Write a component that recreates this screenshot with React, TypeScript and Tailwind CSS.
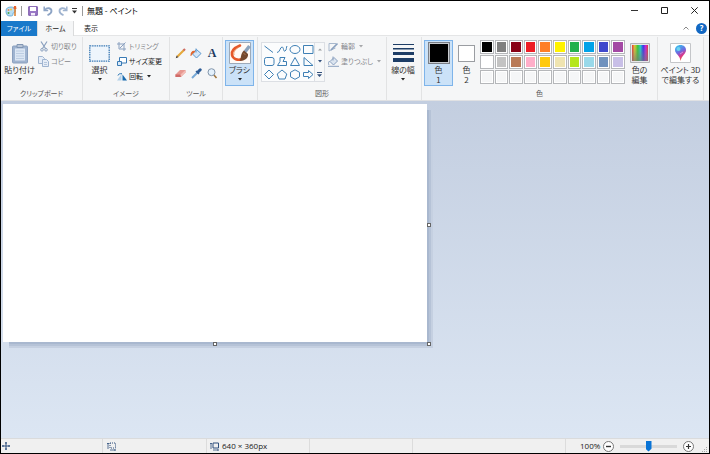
import React from "react";
import { clsx } from "clsx";

type Kids = { children?: React.ReactNode };

function Icon({ w, h, vb, className, children }: Kids & { w: string; h: string; vb: string; className?: string }) {
  return (
    <svg viewBox={vb} className={clsx("shrink-0", w, h, className)} fill="none" aria-hidden="true">
      {children}
    </svg>
  );
}

function Caret({ className = "text-[#222]" }: { className?: string }) {
  return (
    <Icon w="w-[4px]" h="h-[3px]" vb="0 0 4 3" className={className}>
      <path d="M0 0h4L2 2.500z" fill="currentColor" />
    </Icon>
  );
}

function Group({ label, width, children }: Kids & { label?: string; width: string }) {
  return (
    <section className={clsx("flex shrink-0 flex-col border-r border-[#e2e3e4]", width)} aria-label={label}>
      <div className="flex h-[50px]">{children}</div>
      {label && <div className="text-center text-[7px] leading-[13px] text-[#555]">{label}</div>}
    </section>
  );
}

function BigButton({
  label,
  second,
  caret,
  active,
  width,
  children,
}: Kids & { label: string; second?: string; caret?: boolean; active?: boolean; width: string }) {
  return (
    <button
      className={clsx(
        "mt-[3px] flex h-[46px] shrink-0 flex-col items-center border",
        active ? "border-[#7eb4ea] bg-[#cbe2f8]" : "border-transparent",
        width,
      )}
    >
      <span className="flex h-[24px] items-center justify-center">{children}</span>
      <span className="whitespace-nowrap leading-[10px]">{label}</span>
      {second && <span className="whitespace-nowrap leading-[10px]">{second}</span>}
      {caret && (
        <span className="mt-[3px]">
          <Caret />
        </span>
      )}
    </button>
  );
}

function SmallButton({ label, caret, disabled, children }: Kids & { label: string; caret?: boolean; disabled?: boolean }) {
  return (
    <button
      disabled={disabled}
      className={clsx("flex h-[15px] items-center gap-[2px] text-[7px] whitespace-nowrap", disabled ? "text-[#85878b]" : "text-[#222]")}
    >
      <span className="flex w-[11px] justify-center">{children}</span>
      <span>{label}</span>
      {caret && <Caret className={clsx("ml-[2px]", disabled ? "text-[#a5a7aa]" : "text-[#222]")} />}
    </button>
  );
}

function TitleBar() {
  return (
    <header className="flex h-[20px] items-center bg-white pb-px pl-1 text-black">
      <Icon w="w-3" h="h-3" vb="0 0 12 12">
        <path d="M1 6c0-3 2-4 5-4 4 0 5 3 4 5-1 1-2 0-2 2 0 2-1 2-3 2-3 0-4-2-4-5z" fill="#b9ddf2" stroke="#5ba3cf" strokeWidth=".8" />
        <circle cx="3.500" cy="5" r="1" fill="#e88b5c" />
        <circle cx="3.500" cy="8" r="1" fill="#48a54a" />
        <circle cx="6" cy="4.500" r="1" fill="#f6c443" />
        <path d="M10 3v8" stroke="#db7b26" strokeWidth="1.500" />
        <path d="M9 1h2l.5 3h-3z" fill="#e8622a" />
      </Icon>
      <span className="ml-1 h-[10px] w-px bg-[#9a9a9a]" />
      <button aria-label="上書き保存" className="ml-[6px]">
        <Icon w="w-[10px]" h="h-[10px]" vb="0 0 10 10">
          <path d="M.7.7h8.600v8.600H.7z" fill="#9a78c6" stroke="#7a57ab" />
          <path d="M2 1h6v4H2z" fill="#fff" />
          <path d="M3 7h4v2.500H3z" fill="#f3ecfa" />
        </Icon>
      </button>
      <button aria-label="元に戻す" className="ml-[5px]">
        <Icon w="w-[10px]" h="h-[10px]" vb="0 0 10 10">
          <path d="M1.200 .5v4h4" stroke="#8da4c5" strokeWidth="1.500" />
          <path d="M2 4c2-3 6.500-2 6.500 1 0 2-1.500 3-4 4.200" stroke="#8da4c5" strokeWidth="1.800" />
        </Icon>
      </button>
      <button aria-label="やり直し" className="ml-[5px]">
        <Icon w="w-[10px]" h="h-[10px]" vb="0 0 10 10">
          <path d="M8.800 .5v4h-4" stroke="#9fb3cf" strokeWidth="1.500" />
          <path d="M8 4C6 1 1.500 2 1.500 5c0 2 1.500 3 4 4.200" stroke="#9fb3cf" strokeWidth="1.800" />
        </Icon>
      </button>
      <button aria-label="クイック アクセス ツール バーのカスタマイズ" className="ml-[4px]">
        <Icon w="w-[5px]" h="h-[6px]" vb="0 0 5 6">
          <path d="M0 .5h5" stroke="#333" />
          <path d="M0 2.500h5L2.500 5.500z" fill="#333" />
        </Icon>
      </button>
      <span className="ml-[5px] h-[10px] w-px bg-[#9a9a9a]" />
      <h1 className="ml-[4px] whitespace-nowrap">無題 - ペイント</h1>
      <div className="ml-auto flex">
        <button aria-label="最小化" className="flex h-[18px] w-[30px] items-center justify-center">
          <Icon w="w-[7px]" h="h-[7px]" vb="0 0 7 7">
            <path d="M0 3.500h7" stroke="#333" />
          </Icon>
        </button>
        <button aria-label="最大化" className="flex h-[18px] w-[30px] items-center justify-center">
          <Icon w="w-[7px]" h="h-[7px]" vb="0 0 7 7">
            <path d="M.5.5h6v6h-6z" stroke="#222" />
          </Icon>
        </button>
        <button aria-label="閉じる" className="flex h-[18px] w-[30px] items-center justify-center">
          <Icon w="w-[7px]" h="h-[7px]" vb="0 0 7 7">
            <path d="M.3.3l6.400 6.400M6.700.3L.3 6.700" stroke="#222" />
          </Icon>
        </button>
      </div>
    </header>
  );
}

function Tabs() {
  return (
    <nav className="flex h-[15px] items-stretch bg-white text-[7px] text-[#222]">
      <button className="w-[36px] bg-[#1979ca] text-white">ファイル</button>
      <button className="w-[37px] border-x border-[#dadbdc] bg-[#f5f6f7]">ホーム</button>
      <div className="flex flex-1 items-center border-b border-[#e4e5e6]">
        <button className="w-[34px]">表示</button>
        <button aria-label="リボンの最小化" className="ml-auto">
          <Icon w="w-[6px]" h="h-[4px]" vb="0 0 6 4">
            <path d="M.5 3.500L3 1l2.500 2.500" stroke="#888" />
          </Icon>
        </button>
        <button
          aria-label="ヘルプ"
          className="mr-[2px] ml-[7px] flex size-[11px] items-center justify-center rounded-full bg-[#1268c3] text-[8px] leading-none font-bold text-white"
        >
          ?
        </button>
      </div>
    </nav>
  );
}

const shapes: { name: string; d: string }[] = [
  { name: "直線", d: "M1.500 2L10 8.500" },
  { name: "曲線", d: "M1 8.500C4 8.500 4 3 6 3s1 5 3 4 1-4 2-5" },
  { name: "楕円", d: "M1 5.500a5 4 0 1 0 10 0a5 4 0 1 0-10 0" },
  { name: "四角形", d: "M1.500 1.500h9.500v8h-9.500z" },
  { name: "角丸四角形", d: "M3.500 1.500h5.500q2 0 2 2v4q0 2-2 2H3.500q-2 0-2-2v-4q0-2 2-2z" },
  { name: "多角形", d: "M1.500 9.500l2.500-4V1.500h5l-2 4h3.500v4z" },
  { name: "三角形", d: "M6 1.500l4.500 8h-9z" },
  { name: "直角三角形", d: "M2 1.500v8h9z" },
  { name: "ひし形", d: "M6 1l4.500 4.500L6 10 1.500 5.500z" },
  { name: "五角形", d: "M6 1l4.800 4L9 10H3L1.200 5z" },
  { name: "六角形", d: "M6 .8l4.500 2.500v4.500L6 10.300 1.500 7.800V3.300z" },
  { name: "右矢印", d: "M1.500 3.500h5v-2L11 5.500l-4.500 4v-2h-5z" },
];

function Shapes() {
  return (
    <div className="mt-[5px] ml-[3px] flex h-[40px] w-[64px] shrink-0 border border-[#dcdfe4] bg-[#fbfcfd]">
      <div className="grid flex-1 grid-cols-4 grid-rows-3 place-items-center">
        {shapes.map((s) => (
          <button key={s.name} aria-label={s.name}>
            <Icon w="w-[12px]" h="h-[11px]" vb="0 0 12 11">
              <path d={s.d} stroke="#3f80b5" strokeWidth="1" />
            </Icon>
          </button>
        ))}
      </div>
      <div className="flex w-[10px] flex-col items-center justify-around border-l border-[#dcdfe4] bg-[#f7f8f9]">
        <button aria-label="上へ">
          <Icon w="w-[4px]" h="h-[3px]" vb="0 0 4 3">
            <path d="M0 2.500h4L2 .5z" fill="#9a9ca0" />
          </Icon>
        </button>
        <button aria-label="下へ">
          <Icon w="w-[4px]" h="h-[3px]" vb="0 0 4 3">
            <path d="M0 0h4L2 2.500z" fill="#33507c" />
          </Icon>
        </button>
        <button aria-label="その他">
          <Icon w="w-[5px]" h="h-[5px]" vb="0 0 5 5">
            <path d="M0 0h5v1H0zM0 2.200h5L2.500 5z" fill="#33507c" />
          </Icon>
        </button>
      </div>
    </div>
  );
}

const palette: { id: string; color: string }[] = [
  { id: "黒", color: "bg-[#000000]" },
  { id: "灰色-50%", color: "bg-[#7f7f7f]" },
  { id: "濃い赤", color: "bg-[#880015]" },
  { id: "赤", color: "bg-[#ed1c24]" },
  { id: "オレンジ", color: "bg-[#ff7f27]" },
  { id: "黄", color: "bg-[#fff200]" },
  { id: "緑", color: "bg-[#22b14c]" },
  { id: "青緑", color: "bg-[#00a2e8]" },
  { id: "藍色", color: "bg-[#3f48cc]" },
  { id: "紫", color: "bg-[#a349a4]" },
  { id: "白", color: "bg-[#ffffff]" },
  { id: "灰色-25%", color: "bg-[#c3c3c3]" },
  { id: "茶", color: "bg-[#b97a57]" },
  { id: "ローズ", color: "bg-[#ffaec9]" },
  { id: "ゴールド", color: "bg-[#ffc90e]" },
  { id: "薄い黄", color: "bg-[#efe4b0]" },
  { id: "ライム", color: "bg-[#b5e61d]" },
  { id: "薄い青緑", color: "bg-[#99d9ea]" },
  { id: "青灰色", color: "bg-[#7092be]" },
  { id: "薄い紫", color: "bg-[#c8bfe7]" },
  ...Array.from({ length: 10 }, (_, i) => ({ id: `ユーザー設定 ${i + 1}`, color: "bg-[#f5f6f7]" })),
];

function Ribbon() {
  return (
    <div className="flex h-[65px] border-b border-[#e0e1e3] bg-[#f5f6f7] pt-px text-[#333]">
      <Group label="クリップボード" width="w-[82px]">
        <BigButton label="貼り付け" caret width="w-[37px]">
          <Icon w="w-[18px]" h="h-[21px]" vb="0 0 18 21">
            <rect x="1.500" y="3" width="15" height="17" rx="1" fill="#9fb4d0" stroke="#8aa0bf" />
            <path d="M4 5.500h10v12H4z" fill="#dce7f4" />
            <path d="M5 8h8M5 10.500h8M5 13h8M5 15.500h8" stroke="#bccde2" />
            <path d="M6 1.500h6v3H6z" fill="#b9c6d8" stroke="#8196b3" />
          </Icon>
        </BigButton>
        <div className="flex flex-col pt-[2px]">
          <SmallButton label="切り取り" disabled>
            <Icon w="w-[8px]" h="h-[11px]" vb="0 0 8 11">
              <path d="M1 .5l4.500 7M7 .5l-4.500 7" stroke="#8aa0bf" strokeWidth="1.200" />
              <circle cx="2" cy="8.800" r="1.300" stroke="#8aa0bf" />
              <circle cx="6" cy="8.800" r="1.300" stroke="#8aa0bf" />
            </Icon>
          </SmallButton>
          <SmallButton label="コピー" disabled>
            <Icon w="w-[11px]" h="h-[11px]" vb="0 0 11 11">
              <path d="M.5.5h4l2 2v5h-6z" fill="#e6edf7" stroke="#9fb4d0" />
              <path d="M4.500 3.500h4l2 2v5h-6z" fill="#e6edf7" stroke="#9fb4d0" />
              <path d="M6 6.500h3M6 8.500h3" stroke="#9fb4d0" strokeWidth=".7" />
            </Icon>
          </SmallButton>
        </div>
      </Group>

      <Group label="イメージ" width="w-[87px]">
        <BigButton label="選択" caret width="w-[33px]">
          <Icon w="w-[21px]" h="h-[17px]" vb="0 0 21 17">
            <path d="M.8.8h19.400v15.400H.8z" fill="#eef5fc" stroke="#397ab5" strokeWidth="1.300" strokeDasharray="1.500 .8" />
          </Icon>
        </BigButton>
        <div className="flex flex-col pt-[2px]">
          <SmallButton label="トリミング" disabled>
            <Icon w="w-[9px]" h="h-[9px]" vb="0 0 9 9">
              <path d="M2 0v7h7M0 2h7v7M3 6l5.500-5.500" stroke="#8aa0bf" />
            </Icon>
          </SmallButton>
          <SmallButton label="サイズ変更">
            <Icon w="w-[10px]" h="h-[9px]" vb="0 0 10 9">
              <path d="M2.500.5h7v5.500h-7z" fill="#fff" stroke="#397ab5" />
              <path d="M.5 4.500h4v4h-4z" fill="#d7e8f8" stroke="#397ab5" />
            </Icon>
          </SmallButton>
          <SmallButton label="回転" caret>
            <Icon w="w-[10px]" h="h-[8px]" vb="0 0 10 8">
              <path d="M4.500 1v6.500H0z" fill="#b4d1ea" />
              <path d="M5.500 1.500v6H10z" fill="#1769ad" />
              <path d="M1 2.500C1.500.8 3 .5 5 .8" stroke="#1769ad" />
            </Icon>
          </SmallButton>
        </div>
      </Group>

      <Group label="ツール" width="w-[53px]">
        <div className="mt-[6px] ml-[2px] grid h-[40px] w-[48px] grid-cols-3 grid-rows-2 place-items-center">
          <button aria-label="鉛筆">
            <Icon w="w-[11px]" h="h-[11px]" vb="0 0 11 11">
              <path d="M2.500 8.500L9 2" stroke="#e5a93c" strokeWidth="2.200" />
              <path d="M8.500 2.500l1.500-1.500" stroke="#cf6b62" strokeWidth="2.200" />
              <path d="M.7 10.300l1-2.700 1.700 1.700z" fill="#4a3a2a" />
            </Icon>
          </button>
          <button aria-label="塗りつぶし">
            <Icon w="w-[12px]" h="h-[11px]" vb="0 0 12 11">
              <path d="M6.500 1.500l4.500 4-4.500 4.500-4-4z" fill="#d3e6f8" stroke="#5a96cc" />
              <path d="M6 .5v4" stroke="#5a96cc" />
              <path d="M5.500 2.800C2 2 .3 4 .5 8c1.500 0 1.200-2.200 3.500-3z" fill="#e0672f" />
            </Icon>
          </button>
          <button aria-label="テキスト" className="font-['Liberation_Serif',serif] text-[12px] leading-none font-bold text-[#1f3a61]">
            A
          </button>
          <button aria-label="消しゴム">
            <Icon w="w-[11px]" h="h-[9px]" vb="0 0 11 9">
              <path d="M5 1h5.500v2.500L6 8H.5V5.500z" fill="#e79891" />
              <path d="M.5 5.500h5L6 8H.5z" fill="#cf6b68" />
              <path d="M5.500 5.500l5-4.500v2.500L6 8z" fill="#f3bbb4" />
            </Icon>
          </button>
          <button aria-label="色の選択">
            <Icon w="w-[11px]" h="h-[11px]" vb="0 0 11 11">
              <path d="M1 10l5-5" stroke="#77a9d6" strokeWidth="2" />
              <path d="M5 3l3 3" stroke="#2d5c96" strokeWidth="1.500" />
              <path d="M7 4l2.200-2.200" stroke="#2d5c96" strokeWidth="3" strokeLinecap="round" />
            </Icon>
          </button>
          <button aria-label="拡大鏡">
            <Icon w="w-[11px]" h="h-[11px]" vb="0 0 11 11">
              <path d="M6.500 6.500L9.500 10" stroke="#a1763e" strokeWidth="1.600" />
              <circle cx="4.500" cy="4.200" r="3.500" fill="#e4f1fc" stroke="#8295aa" />
            </Icon>
          </button>
        </div>
      </Group>

      <Group width="w-[35px]">
        <span className="w-[2px] shrink-0" />
        <BigButton label="ブラシ" caret active width="w-[29px]">
          <Icon w="w-[22px]" h="h-[22px]" vb="0 0 22 22">
            <path d="M.5.5h21v21H.5z" fill="#fffaf6" stroke="#9daab9" />
            <path d="M11 3.500C5 6 2 9 3 13s6 6 10 4" stroke="#e5582a" strokeWidth="2.600" strokeLinecap="round" />
            <path d="M10 5C6 7.500 4 10 5 13" stroke="#f08d58" />
            <path d="M20.500 4L15.500 10.500" stroke="#8ba3bd" strokeWidth="3.400" />
            <path d="M15 8.500l4 3.500c.5 4-3 7-8.500 7 2-2 .5-7 4.500-10.500z" fill="#74492f" />
            <path d="M14.500 11l2 2" stroke="#a9764f" />
          </Icon>
        </BigButton>
      </Group>

      <Group label="図形" width="w-[129px]">
        <Shapes />
        <div className="ml-[3px] flex flex-col pt-[2px]">
          <SmallButton label="輪郭" caret disabled>
            <Icon w="w-[11px]" h="h-[10px]" vb="0 0 11 10">
              <path d="M8 1.500H1v7.500l6.500-3" stroke="#a8b8cd" />
              <path d="M3 8l6.500-6.500" stroke="#8aa0bf" strokeWidth="1.700" />
            </Icon>
          </SmallButton>
          <SmallButton label="塗りつぶし" caret disabled>
            <Icon w="w-[11px]" h="h-[11px]" vb="0 0 11 11">
              <path d="M6 1.500l3.500 3.500-4 4L2 5.500z" fill="#dce5f0" stroke="#8aa0bf" />
              <path d="M5 .5v4M1.500 5C0 7 .5 8 1 9M0 10.300h11" stroke="#8aa0bf" />
            </Icon>
          </SmallButton>
        </div>
      </Group>

      <Group width="w-[35px]">
        <BigButton label="線の幅" caret width="w-[32px]">
          <Icon w="w-[21px]" h="h-[19px]" vb="0 0 21 19">
            <path d="M0 0h21v1H0zM0 4h21v1.500H0zM0 8h21v3H0zM0 14h21v4H0z" fill="#1d3d66" />
          </Icon>
        </BigButton>
      </Group>

      <Group label="色" width="w-[236px]">
        <span className="w-[2px] shrink-0" />
        <BigButton label="色" second="1" active width="w-[29px]">
          <span className="flex size-[22px] border border-[#7a7f87] bg-[#c9ccd0] p-px">
            <span className="flex-1 bg-black" />
          </span>
        </BigButton>
        <BigButton label="色" second="2" width="w-[27px]">
          <span className="flex size-[17px] border border-[#9a9da2] bg-white" />
        </BigButton>
        <div className="mt-[3px] grid h-[44px] w-[145px] shrink-0 grid-cols-10 grid-rows-3 gap-px">
          {palette.map((p) => (
            <button key={p.id} aria-label={p.id} className="flex border border-[#b5b7ba] bg-white p-px">
              <span className={clsx("h-full flex-1", p.color)} />
            </button>
          ))}
        </div>
        <BigButton label="色の" second="編集" width="w-[29px]">
          <Icon w="w-[20px]" h="h-[20px]" vb="0 0 20 20">
            <defs>
              <linearGradient id="hue">
                <stop offset="0" stopColor="#e33" />
                <stop offset=".17" stopColor="#dc3" />
                <stop offset=".36" stopColor="#3c3" />
                <stop offset=".53" stopColor="#2cc" />
                <stop offset=".7" stopColor="#33e" />
                <stop offset=".86" stopColor="#c2d" />
                <stop offset="1" stopColor="#e33" />
              </linearGradient>
              <linearGradient id="shade" x2="0" y2="1">
                <stop offset="0" stopColor="#888" stopOpacity="0" />
                <stop offset="1" stopColor="#777" stopOpacity=".7" />
              </linearGradient>
            </defs>
            <path d="M.5.5h19v19H.5z" fill="#e6e7e9" stroke="#b0b2b5" />
            <path d="M2 2h16v16H2z" fill="url(#hue)" />
            <path d="M2 2h16v16H2z" fill="url(#shade)" />
          </Icon>
        </BigButton>
      </Group>

      <Group width="w-[46px]">
        <BigButton label="ペイント 3D" second="で編集する" width="w-[45px]">
          <Icon w="w-[21px]" h="h-[20px]" vb="0 0 21 20">
            <defs>
              <linearGradient id="drop" x1=".2" y1="0" x2=".6" y2="1">
                <stop offset="0" stopColor="#36c5f0" />
                <stop offset=".45" stopColor="#6d6ae0" />
                <stop offset=".7" stopColor="#d9388e" />
                <stop offset="1" stopColor="#f0642f" />
              </linearGradient>
            </defs>
            <path d="M.5.5h20v19H.5z" fill="#fff" stroke="#c4c6c9" />
            <path d="M10.500 2c3.500 0 5.500 2.200 5.500 5 0 4-4 5-5.500 11C10 12 5 11 5 7c0-2.800 2-5 5.500-5z" fill="url(#drop)" />
            <circle cx="8.500" cy="6" r="2" fill="#6bd3f0" />
            <path d="M10 11l3-2" stroke="#d98ad8" />
          </Icon>
        </BigButton>
      </Group>
    </div>
  );
}

function Handle({ className }: { className: string }) {
  return <span className={clsx("absolute size-[4px] border border-[#666] bg-white", className)} />;
}

function Workspace() {
  return (
    <main className="flex flex-1 items-start bg-linear-to-b from-[#c3cee0] to-[#dce6f3] pt-[3px] pl-[2px]">
      <div className="relative aspect-[425/239] w-3/5 bg-white shadow-[4px_4px_0_-2px_#a9b8cf,5px_5px_0_-1px_#b6c3d7,6px_6px_0_0_#c5d0e1]">
        <Handle className="top-1/2 -right-[4px]" />
        <Handle className="-right-[4px] -bottom-[4px]" />
        <Handle className="-bottom-[4px] left-1/2 -translate-x-1/2" />
      </div>
    </main>
  );
}

function SizeIcon({ dashed }: { dashed?: boolean }) {
  return (
    <Icon w="w-[9px]" h="h-[9px]" vb="0 0 9 9">
      <path d="M3 1h5.500v5H3z" stroke="#2f4f7c" strokeDasharray={dashed ? "1 1" : undefined} />
      <path d="M1 7V1M0 2l1-1 1 1M3 8h5.500M7.500 7l1 1-1 1" stroke="#2f4f7c" strokeWidth=".8" />
    </Icon>
  );
}

function StatusBar() {
  return (
    <footer className="flex h-[15px] items-center border-t border-[#dadbdc] bg-[#f0f0f0] font-['Open_Sans',sans-serif] text-[#222]">
      <div className="flex h-full w-[102px] items-center border-r border-[#dcdcdc] pl-px">
        <Icon w="w-[8px]" h="h-[8px]" vb="0 0 8 8">
          <path d="M4 0v8M0 4h8M3 1h2M3 7h2M1 3v2M7 3v2" stroke="#2f4f7c" />
        </Icon>
      </div>
      <div className="flex h-full w-[104px] items-center border-r border-[#dcdcdc] pl-[4px]">
        <SizeIcon dashed />
      </div>
      <div className="flex h-full w-[103px] items-center gap-[3px] border-r border-[#dcdcdc] pl-[3px] whitespace-nowrap">
        <SizeIcon />
        <span>640 × 360px</span>
      </div>
      <div className="h-full w-[103px] border-r border-[#dcdcdc]" />
      <div className="h-full flex-1 border-r border-[#dcdcdc]" />
      <div className="flex h-full w-[143px] items-center pl-[14px]">
        <label htmlFor="zoom" className="w-[23px] whitespace-nowrap">
          100%
        </label>
        <button aria-label="縮小">
          <Icon w="w-[11px]" h="h-[11px]" vb="0 0 11 11">
            <circle cx="5.500" cy="5.500" r="5" fill="#fff" stroke="#777" />
            <path d="M3 5.500h5" stroke="#333" strokeWidth="1.400" />
          </Icon>
        </button>
        <input
          id="zoom"
          type="range"
          defaultValue={50}
          className="mx-[6px] h-[11px] w-[57px] appearance-none bg-transparent [&::-webkit-slider-runnable-track]:h-[3px] [&::-webkit-slider-runnable-track]:bg-[#d9d9d9] [&::-webkit-slider-thumb]:-mt-[4px] [&::-webkit-slider-thumb]:h-[11px] [&::-webkit-slider-thumb]:w-[6px] [&::-webkit-slider-thumb]:appearance-none [&::-webkit-slider-thumb]:bg-[#0a74d6] [&::-webkit-slider-thumb]:[clip-path:polygon(0_0,100%_0,100%_75%,50%_100%,0_75%)]"
        />
        <button aria-label="拡大">
          <Icon w="w-[11px]" h="h-[11px]" vb="0 0 11 11">
            <circle cx="5.500" cy="5.500" r="5" fill="#fff" stroke="#777" />
            <path d="M3 5.500h5M5.500 3v5" stroke="#333" strokeWidth="1.200" />
          </Icon>
        </button>
        <Icon w="w-[6px]" h="h-[6px]" vb="0 0 6 6" className="mr-px ml-auto self-end">
          <path d="M4 0h1v1H4zM4 2h1v1H4zM4 4h1v1H4zM2 2h1v1H2zM2 4h1v1H2zM0 4h1v1H0z" fill="#aaa" />
        </Icon>
      </div>
    </footer>
  );
}

export default function App() {
  return (
    <div
      lang="ja"
      className="flex min-h-screen flex-col border border-black bg-white font-['Noto_Sans_CJK_JP',sans-serif] text-[8px] [font-feature-settings:'palt']"
    >
      <TitleBar />
      <Tabs />
      <Ribbon />
      <Workspace />
      <StatusBar />
    </div>
  );
}
